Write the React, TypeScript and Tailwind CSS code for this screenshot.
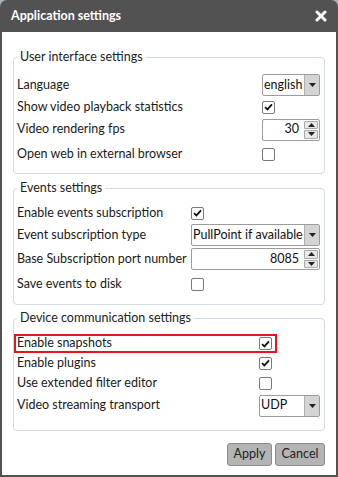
import React from 'react';

const font = { fontFamily: 'Lato, "Open Sans", sans-serif' };

function Check({ on }: { on?: boolean }) {
  return (
    <div className="w-[13px] h-[13px] border border-[#7a7a7a] rounded-[2px] bg-white flex items-center justify-center">
      {on && (
        <svg width="9" height="8" viewBox="0 0 9 8">
          <path d="M1 4.2 L3.4 6.4 L8 1.4" fill="none" stroke="#111" strokeWidth="1.8" />
        </svg>
      )}
    </div>
  );
}

function DownTri() {
  return (
    <svg width="7" height="4" viewBox="0 0 7 4">
      <path d="M0 0 H7 L3.5 4 Z" fill="#222" />
    </svg>
  );
}

function Combo({ value, width }: { value: string; width: string }) {
  return (
    <div className={`${width} h-[22px] border border-[#9c9c9c] rounded-[2px] bg-white flex`}>
      <div className="flex-1 flex items-center pl-[1px] text-[#111] overflow-hidden whitespace-nowrap">{value}</div>
      <div className="w-[15px] border-l border-[#b0b0b0] bg-[#d4d4d4] flex items-center justify-center">
        <DownTri />
      </div>
    </div>
  );
}

function Spin({ value, width }: { value: string; width: string }) {
  return (
    <div className={`${width} h-[22px] border border-[#9c9c9c] rounded-[2px] bg-white flex`}>
      <div className="flex-1 flex items-center justify-end pr-[5px] text-[#111]">{value}</div>
      <div className="w-[15px] flex flex-col gap-[1px] py-[1px] pr-[1px]">
        <div className="flex-1 border border-[#a8a8a8] rounded-[1px] bg-[#e8e8e8] flex items-center justify-center">
          <svg width="7" height="4" viewBox="0 0 7 4">
            <path d="M0 4 H7 L3.5 0 Z" fill="#222" />
          </svg>
        </div>
        <div className="flex-1 border border-[#a8a8a8] rounded-[1px] bg-[#e8e8e8] flex items-center justify-center">
          <DownTri />
        </div>
      </div>
    </div>
  );
}

function Row({ label, labelW, h, children }: { label: string; labelW: string; h: string; children: React.ReactNode }) {
  return (
    <div className={`flex items-center ${h}`}>
      <div className={`${labelW} shrink-0 whitespace-nowrap`}>{label}</div>
      {children}
    </div>
  );
}

function Group({ title, className, children }: { title: string; className: string; children: React.ReactNode }) {
  return (
    <fieldset className={`border border-[#d3dce2] rounded-[4px] pl-[3px] pr-[4px] ${className}`}>
      <legend className="px-[3px] leading-[16px] text-[#222]">{title}</legend>
      {children}
    </fieldset>
  );
}

export default function App() {
  return (
    <div className="w-[338px] h-[477px] bg-[#a7b1b6] text-[12.5px] text-[#1a1a1a]" style={font}>
      <div className="h-full flex flex-col bg-[#525252] rounded-t-[7px] px-[2px] pb-[2px]">
        <div className="h-[32px] shrink-0 flex items-center justify-between pl-[9px] pr-[9px]">
          <span className="text-white font-bold text-[12.5px]">Application settings</span>
          <svg width="12" height="12" viewBox="0 0 12 12">
            <path d="M2 2 L10 10 M10 2 L2 10" stroke="#fff" strokeWidth="3" strokeLinecap="round" />
          </svg>
        </div>
        <div className="flex-1 bg-white px-[11px] pt-[17px] flex flex-col">
          <Group title="User interface settings" className="pt-[8px] pb-[7px]">
            <Row label="Language" labelW="w-[245px]" h="h-[24px]">
              <Combo value="english" width="w-[58px]" />
            </Row>
            <Row label="Show video playback statistics" labelW="w-[245px]" h="h-[20px]">
              <Check on />
            </Row>
            <Row label="Video rendering fps" labelW="w-[245px]" h="h-[25px]">
              <Spin value="30" width="w-[58px]" />
            </Row>
            <Row label="Open web in external browser" labelW="w-[245px]" h="h-[24px]">
              <Check />
            </Row>
          </Group>

          <Group title="Events settings" className="mt-[6px] pt-[7px] pb-[7px]">
            <Row label="Enable events subscription" labelW="w-[174px]" h="h-[20px]">
              <Check on />
            </Row>
            <Row label="Event subscription type" labelW="w-[174px]" h="h-[24px]">
              <Combo value="PullPoint if available" width="w-[129px]" />
            </Row>
            <Row label="Base Subscription port number" labelW="w-[174px]" h="h-[24px]">
              <Spin value="8085" width="w-[129px]" />
            </Row>
            <Row label="Save events to disk" labelW="w-[174px]" h="h-[26px]">
              <Check />
            </Row>
          </Group>

          <Group title="Device communication settings" className="mt-[5px] pt-[8px] pb-[12px]">
            <div className="flex items-center h-[19px] w-[263px] ml-[-3px] border-2 border-[#e8141a] pl-[1px]">
              <div className="w-[242px] shrink-0 whitespace-nowrap">Enable snapshots</div>
              <Check on />
            </div>
            <Row label="Enable plugins" labelW="w-[242px]" h="h-[20px]">
              <Check on />
            </Row>
            <Row label="Use extended filter editor" labelW="w-[242px]" h="h-[20px]">
              <Check />
            </Row>
            <Row label="Video streaming transport" labelW="w-[242px]" h="h-[25px]">
              <Combo value="UDP" width="w-[61px]" />
            </Row>
          </Group>

          <div className="mt-[12px] flex justify-end gap-[3px] pr-[0px]">
            <button className="w-[45px] h-[23px] bg-[#b4b4b4] border border-[#8c8c8c] rounded-[3px] text-[#222]">Apply</button>
            <button className="w-[50px] h-[23px] bg-[#b4b4b4] border border-[#8c8c8c] rounded-[3px] text-[#222]">Cancel</button>
          </div>
        </div>
      </div>
    </div>
  );
}
